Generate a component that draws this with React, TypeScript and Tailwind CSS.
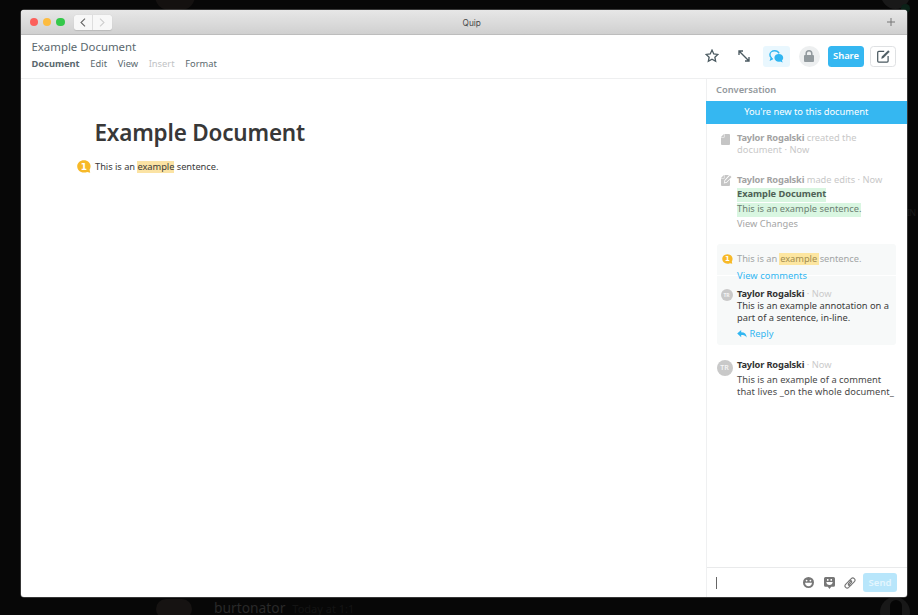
import type { ReactNode } from "react";

function WindowBar() {
  return (
    <div className="flex h-[25px] shrink-0 items-center border-b border-[#bdbdbd] bg-gradient-to-b from-[#e7e7e7] to-[#d0d0d0] pl-[8.5px] pr-3">
      <div className="flex gap-[5.1px]">
        <span className="size-[8.3px] rounded-full bg-[#fc605b]" />
        <span className="size-[8.3px] rounded-full bg-[#fdbc40]" />
        <span className="size-[8.3px] rounded-full bg-[#34c84a]" />
      </div>
      <div className="ml-[9px] flex h-[15px] w-[38px] rounded-[2.5px] bg-[#f8f8f8] shadow-[0_0.5px_1px_rgba(0,0,0,0.12)]">
        <span className="flex w-[19px] items-center justify-center border-r border-[#dedede]">
          <svg width="6" height="9" viewBox="0 0 6 9" fill="none" stroke="#666" strokeWidth="1.1"><path d="M5 .6 1 4.5 5 8.4" /></svg>
        </span>
        <span className="flex w-[19px] items-center justify-center">
          <svg width="6" height="9" viewBox="0 0 6 9" fill="none" stroke="#cfcfcf" strokeWidth="1.1"><path d="M1 .6 5 4.5 1 8.4" /></svg>
        </span>
      </div>
      <span className="ml-[351px] mt-[2px] font-['Inter',sans-serif] text-[8.3px] leading-3 text-[#484848]">Quip</span>
      <svg className="ml-auto" width="8" height="8" viewBox="0 0 8 8" stroke="#777" strokeWidth="1"><path d="M4 0v8M0 4h8" /></svg>
    </div>
  );
}

function Header() {
  return (
    <header className="flex h-[43.5px] shrink-0 justify-between border-b border-[#eeeff0] pl-[10.5px] pr-[11px]">
      <div className="pt-[4px] text-[#5a686e]">
        <div className="text-[11.4px] leading-4">Example Document</div>
        <nav className="mt-[2px] flex gap-[10.7px] text-[9.3px] leading-[14px]">
          <span className="font-bold">Document</span>
          <span>Edit</span>
          <span>View</span>
          <span className="text-[#bfc3c5]">Insert</span>
          <span>Format</span>
        </nav>
      </div>
      <div className="flex items-center">
        <svg className="mr-[19px]" width="14" height="14" viewBox="0 0 14 14" fill="none" stroke="#4b5a61" strokeWidth="1.3"><path d="m7 1.1 1.75 3.8 4.15.5-3.05 2.8.8 4.1L7 10.25 3.35 12.3l.8-4.1L1.1 5.4l4.15-.5z" /></svg>
        <svg className="mr-[13px]" width="12" height="12" viewBox="0 0 12 12" fill="none" stroke="#4b5a61" strokeWidth="1.35"><path d="M1 5V1h4M1 1l10 10M7 11h4V7" /></svg>
        <span className="mr-[8.5px] flex h-[21px] w-[27px] items-center justify-center rounded-[3px] bg-[#e9f7fe]">
          <svg width="15" height="13" viewBox="0 0 15 13"><path d="M5.7.8C3 .8.9 2.5.9 4.8c0 1.2.5 2.2 1.4 2.9L1.7 9.6l2.2-1M5.7.8c2.2 0 3.7 1.1 4.4 2.6" fill="none" stroke="#31b6f1" strokeWidth="1.4" /><path d="M9.8 4.1c2.5 0 4.4 1.6 4.4 3.7 0 1.1-.5 2-1.3 2.7l.8 2-2.5-.9c-.4.1-.9.2-1.4.2-2.5 0-4.4-1.8-4.4-4s1.9-3.7 4.4-3.7z" fill="#31b6f1" /></svg>
        </span>
        <span className="mr-[8.5px] flex size-[21px] items-center justify-center rounded-full bg-[#edeff0]">
          <svg width="10" height="12" viewBox="0 0 10 12"><rect y="5" width="10" height="7" rx="1" fill="#929a9e" /><path d="M2.2 5.5V3.6a2.8 2.8 0 0 1 5.6 0v1.9" fill="none" stroke="#929a9e" strokeWidth="1.5" /></svg>
        </span>
        <button className="mr-[6px] h-[21.5px] w-[36px] rounded-[3.5px] bg-[#35b7f1] text-[9.4px] font-semibold text-white">Share</button>
        <button className="flex h-[21.5px] w-[26px] items-center justify-center rounded-[3.5px] border border-[#dfe1e3]">
          <svg width="13" height="13" viewBox="0 0 13 13" fill="none" stroke="#4b5a61" strokeWidth="1.25"><path d="M7.2 1.4H1.7c-.6 0-1 .4-1 1v8.600c0 .6.4 1 1 1h8.400c.6 0 1-.4 1-1V6" /><path d="m4.500 8.600.5-2L11.200.500l1.300 1.300-6.200 6.200z" fill="#4b5a61" strokeWidth=".3" /></svg>
        </button>
      </div>
    </header>
  );
}

function Bubble({ className }: { className: string }) {
  return (
    <svg className={className} viewBox="0 0 14 13">
      <path d="M6.9.2c3.8 0 6.7 2.7 6.7 6.1 0 1.3-.4 2.4-1 3.4l.6 3-3-.8c-1 .5-2.1.7-3.3.7C3 12.6.2 9.8.2 6.3.2 2.9 3.1.2 6.9.2z" fill="#f7b928" />
      <text x="6.9" y="9.5" textAnchor="middle" fontSize="9" fontWeight="700" fontFamily="DejaVu Sans, sans-serif" fill="#fff">1</text>
    </svg>
  );
}

function Row({ icon, className, children }: { icon: ReactNode; className: string; children: ReactNode }) {
  return (
    <div className={"flex " + className}>
      <div className="w-[20.5px] shrink-0">{icon}</div>
      <div className="min-w-0 whitespace-nowrap">{children}</div>
    </div>
  );
}

function Name({ className }: { className: string }) {
  return <b className={"tracking-[-0.18px] " + className}>Taylor Rogalski</b>;
}

function Avatar({ className }: { className: string }) {
  return <span className={"flex items-center justify-center rounded-full bg-[#c9c9c9] text-[#f5f5f5] " + className}>TR</span>;
}

function Conversation() {
  return (
    <aside className="flex w-[201.5px] shrink-0 flex-col border-l border-[#eff0f1] text-[9.3px] leading-[12px]">
      <div className="h-[22px] pl-[9.5px] pt-[5.5px] font-semibold text-[#93999d]">Conversation</div>
      <div className="-ml-px h-[23px] bg-[#35b7f1] text-center leading-[22px] text-white">You're new to this document</div>
      <div className="flex flex-1 flex-col pl-[10px]">
        <Row className="mt-[8.5px] text-[#c8c8c8]" icon={
          <svg className="ml-[4px] mt-[2px]" width="9" height="11" viewBox="0 0 9 11"><path d="M3.5 0H8q1 0 1 1v9q0 1-1 1H1q-1 0-1-1V3.6h3.5zM2.9 0v3H0z" fill="#c5c5c5" /></svg>
        }>
          <div><Name className="text-[#a3a3a3]" /> created the</div>
          <div className="tracking-[0.05px]">document · Now</div>
        </Row>
        <Row className="mt-[17.5px] text-[#c8c8c8]" icon={
          <svg className="ml-[4px] mt-[1px]" width="11" height="11" viewBox="0 0 11 11"><path d="M3.5 0H8L3.4 5.3 2.8 8.5 5.8 7.7 9 4.4V10q0 1-1 1H1q-1 0-1-1V3.6h3.5zM2.9 0v3H0zM9 .5l1.500 1.400-5 5.200-1.900.5.5-1.900z" fill="#c5c5c5" /></svg>
        }>
          <div><Name className="text-[#a3a3a3]" /> made edits · Now</div>
          <div className="mt-[2.5px] flex h-[13.5px]"><span className="bg-[#d9f6e1] font-bold tracking-[-0.04px] text-[#4f6256]">Example Document</span></div>
          <div className="mt-[1.5px] flex h-[13.5px]"><span className="bg-[#d9f6e1] text-[#6c7f72]">This is an example sentence.</span></div>
          <div className="mt-[1.5px] tracking-[0.02px] text-[#a5a5a5]">View Changes</div>
        </Row>
        <div className="mt-[14px] h-[101px] w-[179px] rounded-[3px] bg-[#f7f9f9]">
          <div className="h-[32px] border-b border-white pt-[8.5px]">
            <Row className="text-[#a2a5a5]" icon={<Bubble className="ml-[5px] mt-[1px] h-[10px] w-[11px]" />}>
              <div className="tracking-[-0.03px]">This is an<span className="ml-[1.5px] mr-px inline-block h-[12px] bg-[#fde6a0] px-[1.5px] text-[#a38e50]">example</span>sentence.</div>
              <div className="mt-[5px] tracking-[0.08px] text-[#31b6f1]">View comments</div>
            </Row>
          </div>
          <Row className="pt-[11.5px] text-[#3a3a3a]" icon={<Avatar className="ml-[4px] mt-[1px] size-[12px] text-[5px] font-bold" />}>
            <div><Name className="text-[#333]" /> <span className="text-[#cbcbcb]">· Now</span></div>
            <div>This is an example annotation on a</div>
            <div>part of a sentence, in-line.</div>
            <div className="mt-[4px] flex items-center gap-[2.5px] text-[#31b6f1]">
              <svg width="10" height="8" viewBox="0 0 10 8"><path d="M4.2 0v2.200C7.600 2.200 9.500 4 9.700 7.500 8.400 5.500 6.800 5 4.200 5v2.300L.2 3.600z" fill="#31b6f1" /></svg>
              Reply
            </div>
          </Row>
        </div>
        <Row className="mt-[13.5px] text-[#484848]" icon={<Avatar className="mt-[1px] size-[16px] text-[7px] font-semibold" />}>
          <div><Name className="text-[#333]" /> <span className="text-[#cbcbcb]">· Now</span></div>
          <div className="mt-[3px] tracking-[0.03px]">This is an example of a comment</div>
          <div className="tracking-[0.09px]">that lives _on the whole document_</div>
        </Row>
      </div>
      <div className="flex h-[30px] items-center border-t border-[#e9eaeb] pl-[9.5px] pr-[10px]">
        <span className="h-[12px] w-px bg-[#666]" />
        <svg className="ml-auto" width="11" height="11" viewBox="0 0 11 11"><circle cx="5.5" cy="5.5" r="5.5" fill="#777" /><path d="M2 5.7h7C8.8 8 7.5 9.2 5.500 9.200S2.200 8 2 5.700z" fill="#fff" /><circle cx="3.6" cy="3.6" r=".9" fill="#fff" /><circle cx="7.4" cy="3.6" r=".9" fill="#fff" /></svg>
        <svg className="ml-[9.5px] mt-px" width="11" height="12" viewBox="0 0 11 12"><path d="M1.5 0h8q1.500 0 1.500 1.500v6.700q0 1.500-1.500 1.500H7.200L5.500 12 3.800 9.700H1.500Q0 9.700 0 8.200V1.500Q0 0 1.500 0z" fill="#777" /><path d="M2.300 5h6.400C8.500 7 7.400 8 5.500 8S2.500 7 2.300 5zM3 2h1.500v1.700H3zM6.500 2H8v1.700H6.500z" fill="#fff" /></svg>
        <svg className="ml-[9px]" width="12" height="12" viewBox="0 0 12 12" fill="none" stroke="#777" strokeWidth="1.15" strokeLinecap="round"><path d="m5.300 3.600 2-2c1.900-1.900 5 .9 3.100 3L6.900 8.200c-1.400 1.300-3.300-.3-2.200-1.800l2.200-2.200" /><path d="m6.700 8.400-2 2c-2 1.900-5-.9-3.100-3l3.500-3.600c1.400-1.300 3.300.3 2.200 1.800L5.100 7.800" /></svg>
        <button className="ml-[7.5px] h-[19px] w-[34px] rounded-[3px] bg-[#b8e6fb] text-[9.5px] font-semibold text-[#e4f6fe]">Send</button>
      </div>
    </aside>
  );
}

export default function App() {
  return (
    <div className="relative h-[615px] w-[918px] overflow-hidden bg-[#070707] pl-[21px] pt-[10px] font-['Noto_Sans',sans-serif]">
      <span className="absolute left-[155px] top-[-18px] h-7 w-[40px] rounded-full bg-[#141110]" />
      <span className="absolute left-[881px] top-[-20px] size-[29px] rounded-full bg-[#191919]" />
      <span className="absolute left-[901px] top-[4px] size-[9px] rounded-full bg-[#0b2218]" />
      <span className="absolute left-[156px] top-[599px] h-[20px] w-[36px] rounded-full bg-[#161312]" />
      <span className="absolute left-[880px] top-[597px] size-[30px] rounded-full bg-[#181818]" />
      <span className="absolute left-[890px] top-[600px] h-[20px] w-[12px] rounded-full bg-[#050505]" />
      <div className="absolute left-[214px] top-[600px] flex h-[15px] items-baseline gap-[7px] whitespace-nowrap leading-[15px] text-[#292929]">
        <span className="text-[13.8px]">burtonator</span><span className="text-[11px] text-[#141414]">Today at 1:1</span>
      </div>
      <span className="absolute left-[907px] top-[206px] text-[9px] tracking-[-0.8px] text-[#191919]">IN</span>
      <div className="relative flex h-[587px] w-[886px] flex-col overflow-hidden rounded-[3px] bg-white shadow-[0_0_0_0.5px_#666]">
        <WindowBar />
        <Header />
        <div className="flex min-h-0 flex-1">
          <main className="flex-1 pl-[73.5px] pt-[37px]">
            <h1 className="text-[22.5px] font-semibold leading-[34px] tracking-[-0.2px] text-[#383838]">Example Document</h1>
            <div className="-ml-[18px] mt-[10px] flex items-center text-[9.3px] leading-[14px] text-[#3a3a3a]">
              <Bubble className="mr-[4.5px] h-[13px] w-[14px]" />
              <span className="tracking-[-0.04px]">This is an <span className="inline-block h-[12px] bg-[#fbe3a4] leading-[12px]">example</span> sentence.</span>
            </div>
          </main>
          <Conversation />
        </div>
      </div>
    </div>
  );
}
